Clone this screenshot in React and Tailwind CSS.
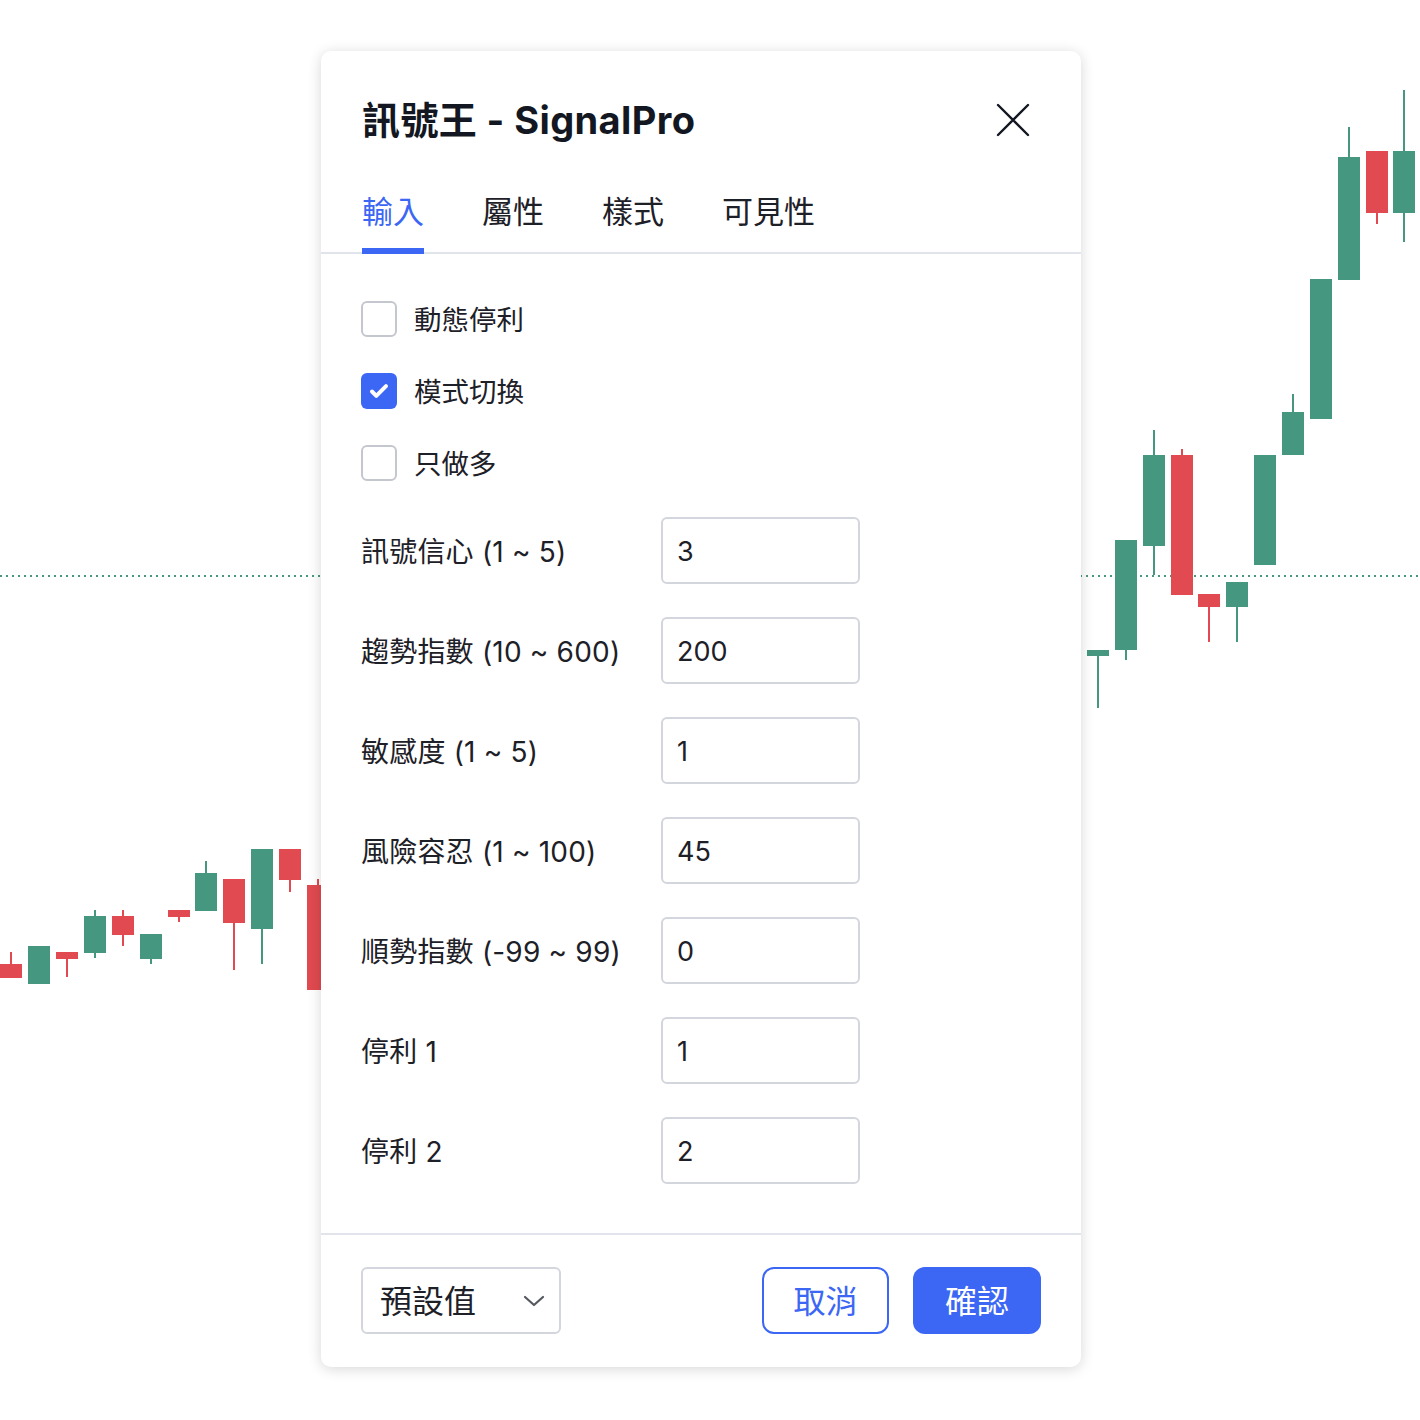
import { useState } from 'react';

const GREEN = '#469780';
const RED = '#e04a50';

// x = left edge of body, [bodyTop, bodyBottom], [wickTop, wickBottom]
const candles = [
  { x: 0, c: RED, b: [964, 978], w: [952, 978] },
  { x: 28, c: GREEN, b: [946, 984], w: [946, 984] },
  { x: 56, c: RED, b: [952, 959], w: [952, 977] },
  { x: 84, c: GREEN, b: [916, 953], w: [910, 958] },
  { x: 112, c: RED, b: [916, 935], w: [910, 946] },
  { x: 140, c: GREEN, b: [934, 959], w: [934, 964] },
  { x: 168, c: RED, b: [910, 917], w: [910, 922] },
  { x: 195, c: GREEN, b: [873, 911], w: [861, 911] },
  { x: 223, c: RED, b: [879, 923], w: [879, 970] },
  { x: 251, c: GREEN, b: [849, 929], w: [849, 964] },
  { x: 279, c: RED, b: [849, 880], w: [849, 892] },
  { x: 307, c: RED, b: [885, 990], w: [879, 990] },
  { x: 1087, c: GREEN, b: [650, 656], w: [650, 708] },
  { x: 1115, c: GREEN, b: [540, 650], w: [540, 660] },
  { x: 1143, c: GREEN, b: [455, 546], w: [430, 575] },
  { x: 1171, c: RED, b: [455, 595], w: [449, 595] },
  { x: 1198, c: RED, b: [594, 607], w: [594, 642] },
  { x: 1226, c: GREEN, b: [582, 607], w: [582, 642] },
  { x: 1254, c: GREEN, b: [455, 565], w: [455, 565] },
  { x: 1282, c: GREEN, b: [412, 455], w: [394, 455] },
  { x: 1310, c: GREEN, b: [279, 419], w: [279, 419] },
  { x: 1338, c: GREEN, b: [157, 280], w: [127, 280] },
  { x: 1366, c: RED, b: [151, 213], w: [151, 224] },
  { x: 1393, c: GREEN, b: [151, 213], w: [90, 242] },
];

function Chart() {
  return (
    <svg className="absolute inset-0" width="1420" height="1420" viewBox="0 0 1420 1420">
      <line x1="0" y1="576" x2="1420" y2="576" stroke={GREEN} strokeWidth="2" strokeDasharray="2 4" />
      {candles.map((k, i) => (
        <g key={i} fill={k.c}>
          <rect x={k.x + 10} y={k.w[0]} width="2" height={k.w[1] - k.w[0]} />
          <rect x={k.x} y={k.b[0]} width="22" height={k.b[1] - k.b[0]} />
        </g>
      ))}
    </svg>
  );
}

function Checkbox({ checked, label }) {
  return (
    <label className="flex items-center gap-[17px] h-[36px]">
      {checked ? (
        <span className="w-[36px] h-[36px] rounded-[6px] bg-[#3c66f4] flex items-center justify-center">
          <svg width="24" height="24" viewBox="0 0 24 24" fill="none" stroke="white" strokeWidth="4" strokeLinecap="round" strokeLinejoin="round">
            <path d="M5 12.5l4.3 4.3L19 7.2" />
          </svg>
        </span>
      ) : (
        <span className="w-[36px] h-[36px] rounded-[6px] border-2 border-[#c4c7ce] bg-white" />
      )}
      <span className="text-[27.5px] text-[#1d2027] leading-none pt-[4px]">{label}</span>
    </label>
  );
}

function NumberRow({ label, value }) {
  return (
    <div className="flex items-center h-[66px]">
      <span className="w-[300px] text-[28px] tracking-[0.2px] text-[#1d2027] leading-none pt-[4px]">{label}</span>
      <div className="w-[199px] h-[67px] rounded-[6px] border-2 border-[#d3d6dc] flex items-center pl-[14px] pt-[5px] text-[27px] text-[#1d2027]">
        {value}
      </div>
    </div>
  );
}

const fields = [
  ['訊號信心 (1 ~ 5)', '3'],
  ['趨勢指數 (10 ~ 600)', '200'],
  ['敏感度 (1 ~ 5)', '1'],
  ['風險容忍 (1 ~ 100)', '45'],
  ['順勢指數 (-99 ~ 99)', '0'],
  ['停利 1', '1'],
  ['停利 2', '2'],
];

const tabs = ['輸入', '屬性', '樣式', '可見性'];

export default function App() {
  const [tab] = useState(0);

  return (
    <div
      className="relative w-[1420px] h-[1420px] overflow-hidden bg-white"
      style={{ fontFamily: 'Inter, "Noto Sans CJK TC", sans-serif' }}
    >
      <Chart />

      <div className="absolute left-[321px] top-[51px] w-[760px] rounded-[10px] bg-white shadow-[0_2px_14px_rgba(0,0,0,0.16)]">
        {/* Header */}
        <div className="flex items-center justify-between pl-[41px] pr-[51px] pt-[47px]">
          <h1 className="text-[38px] font-bold leading-[44px] text-[#131722] tracking-[0.4px]">訊號王 - SignalPro</h1>
          <svg width="34" height="34" viewBox="0 0 34 34" stroke="#131722" strokeWidth="2.4" strokeLinecap="round">
            <path d="M2 2L32 32M32 2L2 32" />
          </svg>
        </div>

        {/* Tabs */}
        <div className="flex gap-[58px] px-[41px] mt-[50px] border-b-2 border-[#e1e4ea]">
          {tabs.map((t, i) => (
            <div
              key={t}
              className={
                'text-[31px] leading-[40px] pb-[16px] border-b-[6px] -mb-[2px] ' +
                (i === tab ? 'text-[#3c66f4] border-[#3c66f4]' : 'text-[#1d2027] border-transparent')
              }
            >
              {t}
            </div>
          ))}
        </div>

        {/* Body */}
        <div className="px-[40px] pt-[47px] pb-[50px]">
          <div className="flex flex-col gap-[36px]">
            <Checkbox label="動態停利" />
            <Checkbox checked label="模式切換" />
            <Checkbox label="只做多" />
          </div>
          <div className="flex flex-col gap-[34px] mt-[36px]">
            {fields.map(([l, v]) => (
              <NumberRow key={l} label={l} value={v} />
            ))}
          </div>
        </div>

        {/* Footer */}
        <div className="flex items-center justify-between border-t-2 border-[#e1e4ea] px-[40px] pt-[32px] pb-[33px]">
          <div className="w-[200px] h-[67px] rounded-[6px] border-2 border-[#d3d6dc] flex items-center justify-between pl-[17px] pr-[14px]">
            <span className="text-[32px] text-[#1d2027] pt-[2px]">預設值</span>
            <svg width="22" height="12" viewBox="0 0 22 12" fill="none" stroke="#55585f" strokeWidth="2.2" strokeLinecap="round" strokeLinejoin="round">
              <path d="M2 2l9 8 9-8" />
            </svg>
          </div>
          <div className="flex gap-[24px]">
            <button className="w-[127px] h-[67px] rounded-[12px] border-2 border-[#3c66f4] text-[#3c66f4] text-[32px] pt-[2px]">取消</button>
            <button className="w-[128px] h-[67px] rounded-[12px] bg-[#3c66f4] text-white text-[32px] pt-[2px]">確認</button>
          </div>
        </div>
      </div>
    </div>
  );
}
